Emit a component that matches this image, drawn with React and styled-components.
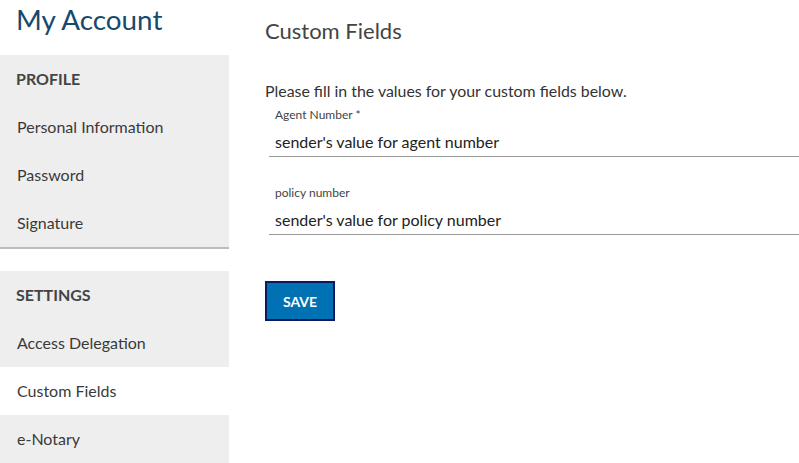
import React, { useState } from 'react';
import styled, { createGlobalStyle } from 'styled-components';

const GlobalStyle = createGlobalStyle`
  body {
    margin: 0;
    background: #fff;
    font-family: Lato, 'Liberation Sans', sans-serif;
  }
`;

const Page = styled.div`
  display: flex;
  width: 799px;
  height: 463px;
  overflow: hidden;
`;

const Sidebar = styled.aside`
  width: 229px;
  flex-shrink: 0;
`;

const Title = styled.h1`
  margin: 0;
  height: 55px;
  padding: 3px 0 0 16px;
  box-sizing: border-box;
  font-size: 27.8px;
  font-weight: 400;
  line-height: 34px;
  color: #17496e;
`;

const Panel = styled.nav`
  background: #eeeeee;
  margin-bottom: ${(props) => props.marginBottom || '0'};
  box-shadow: ${(props) => (props.shadow ? '0 2px 0 #bcbcbc' : 'none')};
`;

const PanelHeader = styled.div`
  height: 48px;
  box-sizing: border-box;
  display: flex;
  align-items: center;
  padding: 0 0 2px 16px;
  font-size: 16px;
  font-weight: 700;
  color: #444;
`;

const NavItem = styled.div`
  height: 48px;
  box-sizing: border-box;
  display: flex;
  align-items: center;
  padding: 0 0 2px 17px;
  font-size: 16px;
  color: #3a3a3a;
  background: ${(props) => (props.active ? '#fff' : 'transparent')};
  cursor: pointer;
`;

const Main = styled.main`
  flex: 1;
  padding: 18px 0 0 36px;
`;

const Heading = styled.h2`
  margin: 0;
  font-size: 22px;
  font-weight: 400;
  line-height: 26px;
  color: #444;
`;

const Intro = styled.p`
  margin: 37px 0 0;
  font-size: 15.9px;
  line-height: 20px;
  color: #333;
`;

const Field = styled.label`
  display: block;
  margin-left: 4px;
  margin-top: ${(props) => props.marginTop || '0'};
  border-bottom: 1px solid #999;
`;

const FieldLabel = styled.div`
  padding-left: 6px;
  font-size: 12px;
  line-height: 16px;
  color: #444;
`;

const FieldInput = styled.input`
  display: block;
  width: 100%;
  box-sizing: border-box;
  border: 0;
  outline: 0;
  padding: 8px 6px 5px;
  font-family: inherit;
  font-size: 16px;
  line-height: 20px;
  height: 33px;
  color: #222;
  background: transparent;
`;

const SaveButton = styled.button`
  margin-top: 46px;
  width: 70px;
  height: 40px;
  box-sizing: border-box;
  background: #0071b3;
  border: 2px solid #0b1a5e;
  color: #fff;
  font-family: inherit;
  font-size: 14px;
  font-weight: 700;
  cursor: pointer;
`;

const App = () => {
  const [values, setValues] = useState({
    agent: "sender's value for agent number",
    policy: "sender's value for policy number",
  });

  const profileItems = ['Personal Information', 'Password', 'Signature'];
  const settingsItems = ['Access Delegation', 'Custom Fields', 'e-Notary'];

  return (
    <>
      <GlobalStyle />
      <Page>
        <Sidebar>
          <Title>My Account</Title>
          <Panel shadow marginBottom="24px">
            <PanelHeader>PROFILE</PanelHeader>
            {profileItems.map((item) => (
              <NavItem key={item}>{item}</NavItem>
            ))}
          </Panel>
          <Panel>
            <PanelHeader>SETTINGS</PanelHeader>
            {settingsItems.map((item) => (
              <NavItem key={item} active={item === 'Custom Fields'}>
                {item}
              </NavItem>
            ))}
          </Panel>
        </Sidebar>
        <Main>
          <Heading>Custom Fields</Heading>
          <Intro>Please fill in the values for your custom fields below.</Intro>
          <Field marginTop="6px">
            <FieldLabel>Agent Number *</FieldLabel>
            <FieldInput
              value={values.agent}
              onChange={(e) => setValues({ ...values, agent: e.target.value })}
            />
          </Field>
          <Field marginTop="28px">
            <FieldLabel>policy number</FieldLabel>
            <FieldInput
              value={values.policy}
              onChange={(e) => setValues({ ...values, policy: e.target.value })}
            />
          </Field>
          <SaveButton>SAVE</SaveButton>
        </Main>
      </Page>
    </>
  );
};

export default App;
